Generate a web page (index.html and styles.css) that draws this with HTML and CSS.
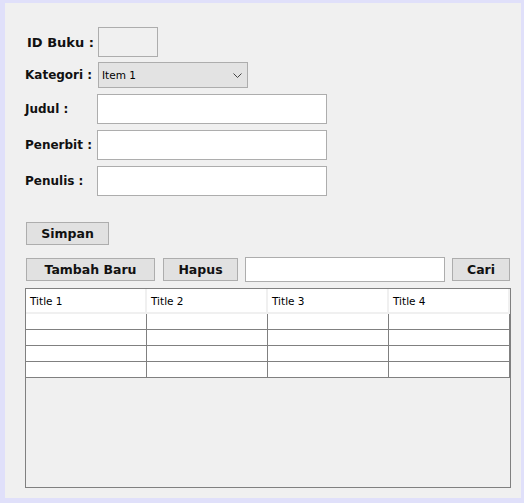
FILE: index.html
```html
<!DOCTYPE html>
<html>
<head>
<meta charset="utf-8">
<link rel="stylesheet" href="styles.css">
</head>
<body>
<div class="frame">
  <div class="form">
    <div class="row row-id">
      <span class="lbl lbl-narrow lbl-id">ID Buku :</span>
      <div class="field field-id"></div>
    </div>
    <div class="row row-cat">
      <span class="lbl lbl-narrow">Kategori :</span>
      <div class="combo">
        <span class="combo-text">Item 1</span>
        <svg class="chev" width="9" height="5" viewBox="0 0 9 5"><path d="M0.5 0.5 L4.5 4.5 L8.5 0.5" fill="none" stroke="#444" stroke-width="1"/></svg>
      </div>
    </div>
    <div class="row row-text">
      <span class="lbl">Judul :</span>
      <div class="field field-wide"></div>
    </div>
    <div class="row row-text">
      <span class="lbl">Penerbit :</span>
      <div class="field field-wide"></div>
    </div>
    <div class="row row-text">
      <span class="lbl">Penulis :</span>
      <div class="field field-wide"></div>
    </div>
  </div>

  <div class="actions">
    <button class="btn btn-simpan">Simpan</button>
  </div>

  <div class="toolbar">
    <button class="btn btn-tambah">Tambah Baru</button>
    <button class="btn btn-hapus">Hapus</button>
    <div class="field field-search"></div>
    <button class="btn btn-cari">Cari</button>
  </div>

  <div class="table">
    <div class="thead">
      <div class="th">Title 1</div>
      <div class="th">Title 2</div>
      <div class="th">Title 3</div>
      <div class="th">Title 4</div>
    </div>
    <div class="tbody">
      <div class="td"></div><div class="td"></div><div class="td"></div><div class="td"></div>
      <div class="td"></div><div class="td"></div><div class="td"></div><div class="td"></div>
      <div class="td"></div><div class="td"></div><div class="td"></div><div class="td"></div>
      <div class="td"></div><div class="td"></div><div class="td"></div><div class="td"></div>
    </div>
  </div>
</div>
</body>
</html>
```

FILE: styles.css
```css
* { box-sizing: border-box; }

html, body {
  margin: 0;
  padding: 0;
}

body {
  width: 524px;
  height: 503px;
  background: #e0e0fa;
  font-family: "DejaVu Sans", sans-serif;
  color: #000;
}

.frame {
  margin: 3px 3px 5px 5px;
  width: 516px;
  height: 495px;
  background: #f0f0f0;
  padding-left: 20px;
  padding-top: 24px;
  overflow: hidden;
}

.form {
  display: flex;
  flex-direction: column;
}

.row {
  display: flex;
  align-items: center;
}

.row-id { height: 30px; }
.row-cat { height: 26px; margin-top: 5px; }
.row-text { height: 30px; margin-top: 6px; }

.lbl {
  width: 72px;
  font-weight: bold;
  font-size: 12px;
  white-space: nowrap;
  color: #111;
}

.lbl-narrow { width: 73px; }
.lbl-id { padding-left: 2px; font-size: 13px; }

.field {
  border: 1px solid #adadad;
  background: #fff;
}

.field-id {
  width: 60px;
  height: 30px;
  background: #f0f0f0;
}

.field-wide {
  width: 230px;
  height: 30px;
}

.combo {
  width: 150px;
  height: 26px;
  border: 1px solid #adadad;
  background: #e3e3e3;
  display: flex;
  align-items: center;
  justify-content: space-between;
  padding: 0 5px 0 3px;
}

.combo-text {
  font-size: 10.5px;
}

.chev { display: block; margin-top: 1px; }

.actions {
  margin-top: 26px;
  padding-left: 1px;
  display: flex;
}

.btn {
  margin: 0;
  height: 23px;
  border: 1px solid #adadad;
  background: #e1e1e1;
  font-family: "DejaVu Sans", sans-serif;
  font-weight: bold;
  font-size: 12.5px;
  color: #111;
  padding: 0;
  display: flex;
  align-items: center;
  justify-content: center;
}

.btn-simpan { width: 83px; }

.toolbar {
  margin-top: 12px;
  padding-left: 1px;
  height: 25px;
  display: flex;
  align-items: center;
}

.btn-tambah { width: 129px; }
.btn-hapus { width: 75px; margin-left: 8px; }
.field-search { width: 200px; height: 25px; margin-left: 7px; }
.btn-cari { width: 58px; margin-left: 7px; }

.table {
  margin-top: 6px;
  width: 486px;
  height: 200px;
  border: 1px solid #808080;
  background: #f0f0f0;
}

.thead {
  display: grid;
  grid-template-columns: repeat(4, 121px);
  height: 25px;
  background: #fff;
  border-bottom: 2px solid #f0f0f0;
}

.th {
  font-size: 10.5px;
  padding-left: 4px;
  display: flex;
  align-items: center;
  border-right: 2px solid #f0f0f0;
}

.tbody {
  display: grid;
  grid-template-columns: repeat(4, 121px);
  grid-auto-rows: 16px;
}

.td {
  background: #fff;
  border-right: 1px solid #808080;
  border-bottom: 1px solid #808080;
}
```
